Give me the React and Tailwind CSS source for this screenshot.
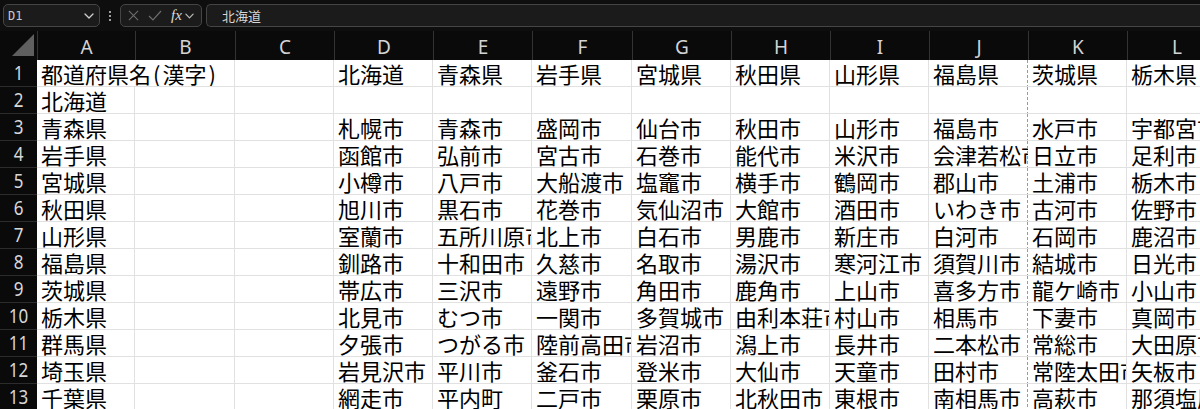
import React from "react";

const COLS = ["A", "B", "C", "D", "E", "F", "G", "H", "I", "J", "K", "L"];
const WIDTHS = [98, 100, 99, 99, 99, 100, 99, 99, 99, 99, 99, 99];

const CITIES = [
  ["札幌市", "青森市", "盛岡市", "仙台市", "秋田市", "山形市", "福島市", "水戸市", "宇都宮市"],
  ["函館市", "弘前市", "宮古市", "石巻市", "能代市", "米沢市", "会津若松市", "日立市", "足利市"],
  ["小樽市", "八戸市", "大船渡市", "塩竈市", "横手市", "鶴岡市", "郡山市", "土浦市", "栃木市"],
  ["旭川市", "黒石市", "花巻市", "気仙沼市", "大館市", "酒田市", "いわき市", "古河市", "佐野市"],
  ["室蘭市", "五所川原市", "北上市", "白石市", "男鹿市", "新庄市", "白河市", "石岡市", "鹿沼市"],
  ["釧路市", "十和田市", "久慈市", "名取市", "湯沢市", "寒河江市", "須賀川市", "結城市", "日光市"],
  ["帯広市", "三沢市", "遠野市", "角田市", "鹿角市", "上山市", "喜多方市", "龍ケ崎市", "小山市"],
  ["北見市", "むつ市", "一関市", "多賀城市", "由利本荘市", "村山市", "相馬市", "下妻市", "真岡市"],
  ["夕張市", "つがる市", "陸前高田市", "岩沼市", "潟上市", "長井市", "二本松市", "常総市", "大田原市"],
  ["岩見沢市", "平川市", "釜石市", "登米市", "大仙市", "天童市", "田村市", "常陸太田市", "矢板市"],
  ["網走市", "平内町", "二戸市", "栗原市", "北秋田市", "東根市", "南相馬市", "高萩市", "那須塩原市"],
];

const PREFS = ["青森県", "岩手県", "宮城県", "秋田県", "山形県", "福島県", "茨城県", "栃木県", "群馬県", "埼玉県", "千葉県"];

const TITLE = (
  <>
    都道府県名<span className="px-[2px]">(</span>漢字<span className="px-[2px]">)</span>
  </>
);

const ROWS = [
  [TITLE, "", "", "北海道", "青森県", "岩手県", "宮城県", "秋田県", "山形県", "福島県", "茨城県", "栃木県"],
  ["北海道", "", "", "", "", "", "", "", "", "", "", ""],
  ...PREFS.map((p, i) => [p, "", "", ...CITIES[i]]),
];

const cellFont = { fontFamily: '"Noto Sans CJK JP", "Noto Sans", sans-serif' };
const headFont = { fontFamily: '"Noto Sans", "Liberation Sans", sans-serif' };

function Chevron({ className }) {
  return (
    <svg viewBox="0 0 10 6" className={className} fill="none" stroke="currentColor" strokeWidth="1.3" strokeLinecap="round" strokeLinejoin="round">
      <path d="M1 1l4 4 4-4" />
    </svg>
  );
}

function FormulaBar() {
  return (
    <div className="flex h-[31px] items-start bg-[#0e0e0e] pt-[4px] pl-[3px]">
      <div className="flex h-[23px] w-[97px] items-center justify-between rounded-[5px] border border-[#454545] bg-[#1b1b1b] pl-[4px] pr-[5px]">
        <span className="text-[12px] text-[#c9c9c9]" style={{ fontFamily: '"DejaVu Sans Mono", monospace' }}>D1</span>
        <Chevron className="h-[6px] w-[10px] text-[#cfcfcf]" />
      </div>
      <div className="flex h-[23px] w-[20px] flex-col items-center justify-center gap-[2px]">
        <span className="h-[2px] w-[2px] rounded-full bg-[#cfcfcf]" />
        <span className="h-[2px] w-[2px] rounded-full bg-[#cfcfcf]" />
        <span className="h-[2px] w-[2px] rounded-full bg-[#cfcfcf]" />
      </div>
      <div className="flex h-[23px] w-[82px] items-center rounded-[5px] border border-[#454545] bg-[#1b1b1b] pl-[7px]">
        <svg viewBox="0 0 12 12" className="h-[11px] w-[11px] text-[#6d6d6d]" fill="none" stroke="currentColor" strokeWidth="1.2">
          <path d="M1 1l10 10M11 1L1 11" />
        </svg>
        <svg viewBox="0 0 14 11" className="ml-[9px] h-[11px] w-[14px] text-[#6d6d6d]" fill="none" stroke="currentColor" strokeWidth="1.2">
          <path d="M1 6l4 4 8-9" />
        </svg>
        <span className="ml-[9px] text-[15px] italic leading-none text-[#dcdcdc]" style={{ fontFamily: '"Liberation Serif", serif' }}>
          fx
        </span>
        <Chevron className="ml-[3px] h-[6px] w-[9px] text-[#bdbdbd]" />
      </div>
      <div className="ml-[4px] flex h-[23px] flex-1 items-center rounded-l-[5px] border border-r-0 border-[#454545] bg-[#1b1b1b] pl-[15px]">
        <span className="text-[13px] text-[#d6d6d6]" style={cellFont}>北海道</span>
      </div>
    </div>
  );
}

function ColumnHeader() {
  return (
    <div className="flex h-[29px] bg-[#0a0a0a]">
      <div className="relative w-[37px] shrink-0">
        <svg viewBox="0 0 22 22" className="absolute bottom-[4px] right-[3px] h-[22px] w-[22px]">
          <polygon points="22,0 22,22 0,22" fill="#5f5f5f" />
        </svg>
      </div>
      {COLS.map((c, i) => (
        <div
          key={c}
          className="flex shrink-0 items-center justify-center border-l border-[#333333] pt-[3px] text-[19px] text-[#d4d4d4]"
          style={{ width: WIDTHS[i], ...headFont }}
        >
          {c}
        </div>
      ))}
    </div>
  );
}

function Row({ index, cells }) {
  return (
    <div className="flex h-[27px]">
      <div
        className="flex w-[37px] shrink-0 items-center justify-center border-b border-[#2c2c2c] bg-[#0a0a0a] text-[#d8d8d8]"
        style={headFont}
      >
        <span className="inline-block scale-x-[0.85] text-[20px] leading-none">{index}</span>
      </div>
      {cells.map((v, i) => {
        if (index === 1 && i === 1) return null;
        const span = index === 1 && i === 0;
        const width = span ? WIDTHS[0] + WIDTHS[1] : WIDTHS[i];
        const pageBreak = i === 9;
        return (
          <div
            key={i}
            className={`relative flex shrink-0 items-center overflow-hidden whitespace-nowrap border-b border-[#e1e1e1] bg-white pl-[4px] text-[22px] leading-none text-black ${pageBreak ? "" : "border-r"}`}
            style={{ width, ...cellFont }}
          >
            {v}
            {pageBreak && <span className="absolute right-0 top-0 h-[28px] border-r border-dashed border-[#9a9a9a]" />}
          </div>
        );
      })}
    </div>
  );
}

export default function App() {
  return (
    <div className="h-[409px] w-[1200px] overflow-hidden bg-[#0e0e0e]">
      <FormulaBar />
      <ColumnHeader />
      <div className="w-[1300px]">
        {ROWS.map((r, i) => (
          <Row key={i} index={i + 1} cells={r} />
        ))}
      </div>
    </div>
  );
}
